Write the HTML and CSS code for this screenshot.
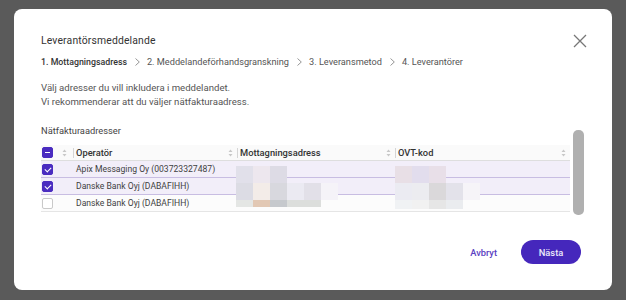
FILE: index.html
```html
<!DOCTYPE html>
<html lang="sv">
<head>
<meta charset="utf-8">
<title>Leverantörsmeddelande</title>
<link rel="stylesheet" href="styles.css">
</head>
<body>
<div class="modal">
  <div class="head">
    <h1 class="title">Leverantörsmeddelande</h1>
    <button class="close" aria-label="Stäng">
      <svg width="14" height="14" viewBox="0 0 14 14"><path d="M1 1L13 13M13 1L1 13" stroke="#777" stroke-width="1.3" fill="none"/></svg>
    </button>
  </div>
  <div class="steps">
    <span class="step active">1. Mottagningsadress</span>
    <svg class="sep" width="5" height="8" viewBox="0 0 5 8"><path d="M0.5 0.5L4.3 4L0.5 7.5" stroke="#8a8a8a" stroke-width="0.9" fill="none"/></svg>
    <span class="step">2. Meddelandeförhandsgranskning</span>
    <svg class="sep" width="5" height="8" viewBox="0 0 5 8"><path d="M0.5 0.5L4.3 4L0.5 7.5" stroke="#8a8a8a" stroke-width="0.9" fill="none"/></svg>
    <span class="step">3. Leveransmetod</span>
    <svg class="sep" width="5" height="8" viewBox="0 0 5 8"><path d="M0.5 0.5L4.3 4L0.5 7.5" stroke="#8a8a8a" stroke-width="0.9" fill="none"/></svg>
    <span class="step">4. Leverantörer</span>
  </div>
  <p class="desc">Välj adresser du vill inkludera i meddelandet.<br>Vi rekommenderar att du väljer nätfakturaadress.</p>

  <div class="scrollarea">
    <div class="content">
      <div class="label">Nätfakturaadresser</div>
      <div class="table">
        <div class="row hdr">
          <div class="cell c0"><span class="cb ind"></span><svg class="sort" width="5" height="8" viewBox="0 0 5 8"><path d="M2.5 0.5L4.5 3H0.5Z M2.5 7.5L4.5 5H0.5Z" fill="#c8c8c8"/></svg></div>
          <div class="cell"><span class="htext">Operatör</span><svg class="sort" width="5" height="8" viewBox="0 0 5 8"><path d="M2.5 0.5L4.5 3H0.5Z M2.5 7.5L4.5 5H0.5Z" fill="#c8c8c8"/></svg></div>
          <div class="cell"><span class="htext">Mottagningsadress</span><svg class="sort" width="5" height="8" viewBox="0 0 5 8"><path d="M2.5 0.5L4.5 3H0.5Z M2.5 7.5L4.5 5H0.5Z" fill="#c8c8c8"/></svg></div>
          <div class="cell"><span class="htext">OVT-kod</span><svg class="sort" width="5" height="8" viewBox="0 0 5 8"><path d="M2.5 0.5L4.5 3H0.5Z M2.5 7.5L4.5 5H0.5Z" fill="#c8c8c8"/></svg></div>
        </div>
        <div class="body">
          <div class="row sel">
            <div class="cell c0"><span class="cb on"></span></div>
            <div class="cell">Apix Messaging Oy (003723327487)</div>
            <div class="cell"></div>
            <div class="cell"></div>
          </div>
          <div class="row sel">
            <div class="cell c0"><span class="cb on"></span></div>
            <div class="cell">Danske Bank Oyj (DABAFIHH)</div>
            <div class="cell"></div>
            <div class="cell"></div>
          </div>
          <div class="row last">
            <div class="cell c0"><span class="cb"></span></div>
            <div class="cell">Danske Bank Oyj (DABAFIHH)</div>
            <div class="cell"></div>
            <div class="cell"></div>
          </div>
          <div class="blur b1">
            <i style="background:#e1e0ea"></i><i style="background:#ede7ee"></i><i style="background:#dddbe5"></i><i class="n"></i><i class="n"></i><i class="n"></i>
            <i style="background:#dcdce4"></i><i style="background:#f3ece8"></i><i style="background:#d8d8de"></i><i style="background:#ebeaf2"></i><i style="background:#e2e0e8"></i><i style="background:#f5f3f8"></i>
            <i style="background:#e4e6e4"></i><i style="background:#e2c8b4"></i><i style="background:#c6c9cd"></i><i style="background:#dcdedc"></i><i style="background:#dcdedc"></i><i class="n"></i>
          </div>
          <div class="blur b2">
            <i style="background:#e8dfe6"></i><i style="background:#e2dded"></i><i style="background:#e8dfe8"></i><i class="n"></i><i class="n"></i>
            <i style="background:#ebebf2"></i><i style="background:#ececf0"></i><i style="background:#dad8da"></i><i style="background:#e3e2ea"></i><i style="background:#f6f4f8"></i>
            <i style="background:#f0f2f4"></i><i style="background:#f1f1f1"></i><i style="background:#e6e6e6"></i><i style="background:#eaecef"></i><i class="n"></i>
          </div>
        </div>
      </div>
    </div>
    <div class="track"><div class="thumb"></div></div>
  </div>

  <div class="footer">
    <button class="btn-link">Avbryt</button>
    <button class="btn-primary">Nästa</button>
  </div>
</div>
</body>
</html>
```
FILE: styles.css
```css
* { box-sizing: border-box; }
html, body { margin: 0; height: 100%; }
body {
  background: #5a5a5a;
  font-family: Roboto, "Noto Sans", sans-serif;
  color: #444;
  padding: 9px 14px 10px 14px;
}
.modal {
  background: #fff;
  border-radius: 8px;
  height: 281px;
  padding: 24px 26px 26px 27px;
  display: flex;
  flex-direction: column;
}
.head {
  display: flex;
  justify-content: space-between;
  align-items: center;
  height: 16px;
}
.title {
  margin: 0;
  font-size: 10.4px;
  font-weight: 400;
  color: #333;
  line-height: 16px;
  letter-spacing: 0.15px;
}
.close {
  border: 0;
  background: none;
  padding: 0;
  width: 14px;
  height: 14px;
  display: flex;
  margin-right: -1px;
}
.steps {
  margin-top: 6px;
  display: flex;
  align-items: center;
  font-size: 9.2px;
  line-height: 14px;
  color: #555;
}
.step.active { color: #333; font-weight: 500; font-size: 8.8px; }
.sep { margin: 0 7px 0 8px; }
.desc {
  margin: 12px 0 0;
  font-size: 9.6px;
  line-height: 14px;
  color: #555;
}
.scrollarea {
  margin-top: 15px;
  display: flex;
  gap: 3px;
}
.content { width: 529px; }
.label {
  font-size: 9.3px;
  line-height: 14px;
  color: #444;
  margin-bottom: 7px;
}
.table { font-size: 8.6px; color: #3f3f3f; }
.row {
  display: grid;
  grid-template-columns: 32px 164px 158px 175px;
  height: 17px;
  border-bottom: 1px solid #c8bde2;
}
.row.hdr {
  height: 16px;
  background: #fafafa;
  border-bottom: 1px solid #dedede;
  color: #333;
  font-weight: 500;
  font-size: 9.3px;
}
.row.sel { background: #f2eef9; }
.row.last { background: #fcfcfc; border-bottom: 1px solid #e5e5e5; }
.cell {
  display: flex;
  align-items: center;
  padding-left: 3px;
  white-space: nowrap;
  position: relative;
}
.cell.c0 { padding-left: 1px; }
.hdr .cell { justify-content: space-between; padding-right: 4px; }
.hdr .cell + .cell::before {
  content: "";
  position: absolute;
  left: 0;
  top: 3px;
  height: 10px;
  border-left: 1px solid #d5d5d5;
}
.sort { display: block; }
.hdr .c0 .sort { margin-right: 2px; }
.cb {
  width: 11px;
  height: 11px;
  border: 1px solid #c9c9c9;
  border-radius: 2px;
  background: #fff;
  position: relative;
}
.cb.on, .cb.ind { background: #4a2cc0; border-color: #4a2cc0; }
.cb.on::after {
  content: "";
  position: absolute;
  left: 3px;
  top: 1px;
  width: 3px;
  height: 5px;
  border: solid #fff;
  border-width: 0 1.3px 1.3px 0;
  transform: rotate(45deg);
}
.cb.ind::after {
  content: "";
  position: absolute;
  left: 2px;
  top: 4px;
  width: 5px;
  height: 1px;
  background: #fff;
}
.body { position: relative; }
.blur {
  position: absolute;
  display: grid;
  grid-auto-rows: 17px;
}
.blur i { display: block; }
.blur i.n { background: transparent; }
.b1 { left: 195px; top: 5px; grid-template-columns: repeat(6, 17px); }
.b1 i:nth-child(n+13) { height: 7px; }
.b2 { left: 354px; top: 5px; grid-template-columns: repeat(5, 17px); }
.b2 i:nth-child(n+11) { height: 9px; }
.track { width: 11px; padding-top: 6px; }
.thumb {
  width: 11px;
  height: 85px;
  background: #b0b0b0;
  border-radius: 5px;
}
.footer {
  margin-top: auto;
  display: flex;
  justify-content: flex-end;
  align-items: center;
  gap: 24px;
  padding-right: 5px;
}
.btn-link {
  border: 0;
  background: none;
  font: 500 9.3px Roboto, sans-serif;
  color: #5b3fc2;
  padding: 0;
}
.btn-primary {
  border: 0;
  background: #4527bc;
  color: #ece9fa;
  font: 500 9.3px Roboto, sans-serif;
  width: 60px;
  height: 24px;
  border-radius: 12px;
}
```
